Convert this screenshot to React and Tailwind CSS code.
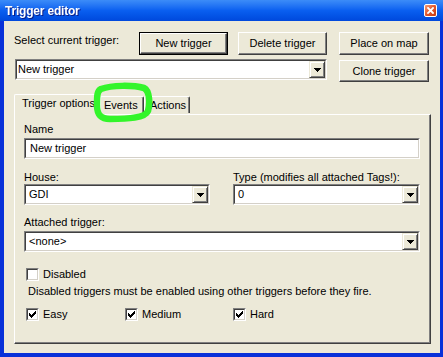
import React from "react";

function Arrow() {
  return (
    <svg width="7" height="4" shapeRendering="crispEdges">
      <rect x="0" y="0" width="7" height="1" fill="#000" />
      <rect x="1" y="1" width="5" height="1" fill="#000" />
      <rect x="2" y="2" width="3" height="1" fill="#000" />
      <rect x="3" y="3" width="1" height="1" fill="#000" />
    </svg>
  );
}

function Btn({ children, className = "", def = false }) {
  const inner = (
    <div className="w-full h-full bg-[#ECE9D8] border border-t-white border-l-white border-r-[#404040] border-b-[#404040] shadow-[inset_-1px_-1px_0_#808080] flex items-center justify-center leading-[13px]">
      {children}
    </div>
  );
  if (def) {
    return <div className={"border border-black " + className}>{inner}</div>;
  }
  return <div className={className}>{inner}</div>;
}

function Sunken({ className = "", children }) {
  return (
    <div className={"border border-t-[#808080] border-l-[#808080] border-b-white border-r-white " + className}>
      <div className="w-full h-full bg-white border border-t-[#404040] border-l-[#404040] border-b-[#d4d0c8] border-r-[#d4d0c8] flex items-center">
        {children}
      </div>
    </div>
  );
}

function Combo({ className = "", text, pl = "pl-[3px]" }) {
  return (
    <Sunken className={className}>
      <div className={"flex-1 leading-[13px] " + pl}>{text}</div>
      <div className="w-[16px] h-full bg-[#ECE9D8] border border-t-[#ECE9D8] border-l-[#ECE9D8] border-r-[#404040] border-b-[#404040] shadow-[inset_1px_1px_0_#fff,inset_-1px_-1px_0_#808080] flex items-center justify-center">
        <Arrow />
      </div>
    </Sunken>
  );
}

function Check({ checked }) {
  return (
    <div className="w-[13px] h-[13px] border border-t-[#808080] border-l-[#808080] border-b-white border-r-white">
      <div className="w-full h-full bg-white border border-t-[#404040] border-l-[#404040] border-b-[#d4d0c8] border-r-[#d4d0c8] flex items-center justify-center">
        {checked && (
          <svg width="7" height="7" shapeRendering="crispEdges">
            <rect x="6" y="0" width="1" height="1" fill="#000" />
            <rect x="5" y="1" width="2" height="1" fill="#000" />
            <rect x="0" y="2" width="1" height="1" fill="#000" />
            <rect x="4" y="2" width="3" height="1" fill="#000" />
            <rect x="0" y="3" width="2" height="1" fill="#000" />
            <rect x="3" y="3" width="3" height="1" fill="#000" />
            <rect x="0" y="4" width="5" height="1" fill="#000" />
            <rect x="1" y="5" width="3" height="1" fill="#000" />
            <rect x="2" y="6" width="1" height="1" fill="#000" />
          </svg>
        )}
      </div>
    </div>
  );
}

export default function App() {
  return (
    <div className="relative w-[443px] h-[357px] bg-[#0831d9] flex flex-col font-['Liberation_Sans',Arial,sans-serif] text-[11px] text-black overflow-hidden">
      {/* Title bar */}
      <div className="h-[21px] bg-gradient-to-b from-[#3c8cf8] via-[#0a5ff0] to-[#0048dc] flex items-center justify-between pl-[5px] pr-[6px]">
        <span className="text-white font-bold text-[12px] tracking-[-0.2px] leading-[14px] drop-shadow-[1px_1px_0_#0a1f8a]">
          Trigger editor
        </span>
        <div className="w-[13px] h-[13px] rounded-[2px] border border-white bg-gradient-to-br from-[#f39a74] via-[#e2562b] to-[#c43b12] flex items-center justify-center">
          <svg width="7" height="7" viewBox="0 0 7 7">
            <path d="M1 1L6 6M6 1L1 6" stroke="#fff" strokeWidth="1.8" strokeLinecap="square" />
          </svg>
        </div>
      </div>

      {/* Body */}
      <div className="flex-1 ml-[4px] mr-[3px] mb-[4px] bg-[#ECE9D8] flex flex-col">
        {/* Row 1 */}
        <div className="mt-[11px] h-[23px] flex pl-[10px]">
          <div className="w-[125px] mt-[2px] leading-[13px]">Select current trigger:</div>
          <Btn def className="w-[89px] h-[23px]">New trigger</Btn>
          <Btn className="w-[89px] h-[23px] ml-[10px]">Delete trigger</Btn>
          <Btn className="w-[90px] h-[23px] ml-[12px]">Place on map</Btn>
        </div>

        {/* Row 2 */}
        <div className="mt-[4px] flex pl-[11px]">
          <Combo className="w-[312px] h-[21px]" text="New trigger" pl="pl-[1px]" />
          <Btn className="w-[90px] h-[22px] ml-[12px] mt-[1px]">Clone trigger</Btn>
        </div>

        {/* Tabs */}
        <div className="mt-[11px] ml-[10px] flex items-end h-[21px] relative z-10">
          <div className="h-[21px] w-[86px] bg-[#ECE9D8] border-t border-l border-t-white border-l-white border-r border-r-[#404040] shadow-[inset_-1px_0_0_#808080] rounded-tl-[2px] rounded-tr-[2px] pl-[7px] pt-[2px] leading-[13px] -mb-[1px]">
            Trigger options
          </div>
          <div className="h-[17px] w-[44px] bg-[#ECE9D8] border-t border-l border-t-white border-l-white border-r border-r-[#404040] shadow-[inset_-1px_0_0_#808080] rounded-tl-[2px] rounded-tr-[2px] pl-[3px] pt-[2px] leading-[13px] mb-[1px]">
            Events
          </div>
          <div className="h-[17px] w-[46px] bg-[#ECE9D8] border-t border-l border-t-white border-l-white border-r border-r-[#404040] shadow-[inset_-1px_0_0_#808080] rounded-tl-[2px] rounded-tr-[2px] pl-[5px] pt-[2px] leading-[13px] mb-[1px]">
            Actions
          </div>
        </div>

        {/* Panel */}
        <div className="ml-[10px] w-[417px] h-[230px] border border-t-white border-l-white border-r-[#404040] border-b-[#404040] shadow-[inset_-1px_-1px_0_#808080] flex flex-col pl-[9px] pt-[8px]">
          <div className="leading-[13px]">Name</div>
          <Sunken className="mt-[2px] w-[396px] h-[21px]">
            <div className="pl-[4px] leading-[13px]">New trigger</div>
          </Sunken>

          <div className="mt-[12px] flex w-[396px] justify-between">
            <div className="flex flex-col w-[186px]">
              <div className="leading-[13px]">House:</div>
              <Combo className="w-[186px] h-[21px]" text="GDI" />
            </div>
            <div className="flex flex-col w-[187px]">
              <div className="leading-[13px]">Type (modifies all attached Tags!):</div>
              <Combo className="w-[187px] h-[21px]" text="0" />
            </div>
          </div>

          <div className="mt-[11px] leading-[13px]">Attached trigger:</div>
          <Combo className="mt-[2px] w-[396px] h-[21px]" text="<none>" />

          <div className="mt-[16px] ml-[2px] flex items-start gap-[4px]">
            <Check />
            <div className="leading-[13px]">Disabled</div>
          </div>
          <div className="mt-[4px] ml-[4px] leading-[13px]">
            Disabled triggers must be enabled using other triggers before they fire.
          </div>

          <div className="mt-[10px] ml-[2px] flex">
            <div className="flex items-start gap-[4px] w-[99px]">
              <Check checked />
              <div className="leading-[13px]">Easy</div>
            </div>
            <div className="flex items-start gap-[4px] w-[108px]">
              <Check checked />
              <div className="leading-[13px]">Medium</div>
            </div>
            <div className="flex items-start gap-[4px]">
              <Check checked />
              <div className="leading-[13px]">Hard</div>
            </div>
          </div>
        </div>
      </div>

      {/* Green highlight scribble */}
      <svg className="absolute left-0 top-0 z-20 pointer-events-none" width="443" height="357" viewBox="0 0 443 357">
        <path
          d="M101 89 C 112 85, 133 85, 144 88 C 150 91, 150 104, 148 111 C 145 118, 128 119, 110 119 C 100 119, 97 114, 97 105 C 97 96, 97 91, 101 89 Z"
          fill="none"
          stroke="#33f52a"
          strokeWidth="6.5"
          strokeLinejoin="round"
          style={{ filter: "blur(0.7px)" }}
        />
      </svg>
    </div>
  );
}
